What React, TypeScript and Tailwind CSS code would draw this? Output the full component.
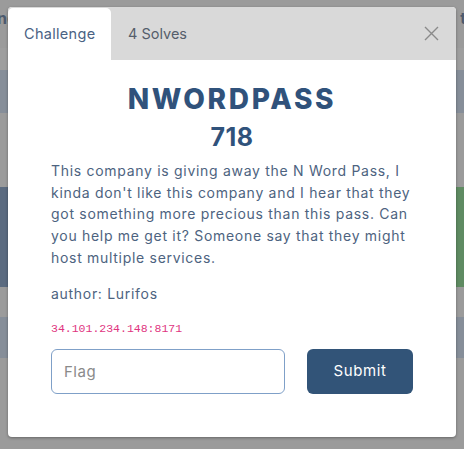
import React from "react";

export default function App() {
  const font = { fontFamily: "Inter, 'Noto Sans', sans-serif" };
  return (
    <div className="relative w-[464px] h-[449px] overflow-hidden bg-[#9b9b9b]" style={font}>
      {/* background page (dimmed) */}
      <div className="flex flex-col">
        <div className="h-[48px] flex justify-between items-start pt-[6px] text-[16px] font-bold text-[#4c5a6e]">
          <span className="-ml-[3px]">ng</span>
          <span className="-mr-[2px]">t</span>
        </div>
        <div className="h-[22px] bg-[#9e9e9e]" />
        <div className="h-[43px] bg-[#868e99]" />
        <div className="h-[74px]" />
        <div className="h-[100px] flex">
          <div className="flex-1 bg-[#5b6b80]" />
          <div className="flex-1 bg-[#5f8b62]" />
        </div>
        <div className="h-[30px]" />
        <div className="h-[41px] bg-[#868e99]" />
      </div>

      {/* modal */}
      <div className="absolute left-[8px] top-[7px] w-[448px] h-[430px] bg-white rounded-[4px] shadow-[0_1px_3px_rgba(0,0,0,0.35)] overflow-hidden flex flex-col">
        <div className="h-[53px] bg-[#d9d9d9] flex items-end relative">
          <div className="h-[52px] w-[103px] bg-white rounded-t-[5px] flex items-center pl-[16px] text-[14.5px] tracking-[0.3px] text-[#4a6283]">
            Challenge
          </div>
          <div className="h-[52px] flex items-center pl-[17px] text-[14.5px] text-[#555e6b]">
            4 Solves
          </div>
          <svg className="absolute right-[17px] top-[19px]" width="15" height="15" viewBox="0 0 15 15">
            <path d="M1 1 L14 14 M14 1 L1 14" stroke="#8a8a8a" strokeWidth="1.4" fill="none" />
          </svg>
        </div>
        <div className="px-[43px] flex flex-col">
          <h1 className="mt-[22px] text-center text-[28px] leading-[34px] font-extrabold tracking-[2.7px] text-[#30527b]">
            NWORDPASS
          </h1>
          <div className="mt-[6px] text-center text-[25px] leading-[30px] font-bold tracking-[0.5px] text-[#30527b]">718</div>
          <p className="mt-[8px] text-[14px] leading-[21.7px] tracking-[0.7px] text-[#4d6380] whitespace-nowrap">
            This company is giving away the N Word Pass, I<br />
            kinda don't like this company and I hear that they<br />
            got something more precious than this pass. Can<br />
            you help me get it? Someone say that they might<br />
            host multiple services.
          </p>
          <p className="mt-[14px] text-[14px] leading-[22px] tracking-[0.7px] text-[#4d6380]">author: Lurifos</p>
          <div className="mt-[16px] text-[11.5px] leading-[16px] text-[#e0357f]" style={{ fontFamily: "'Liberation Mono', monospace" }}>
            34.101.234.148:8171
          </div>
          <div className="mt-[12px] flex items-center gap-[22px]">
            <input
              placeholder="Flag"
              className="w-[234px] h-[45px] rounded-[6px] border border-[#7fa0c8] px-[12px] text-[15px] tracking-[0.5px] text-[#333] placeholder:text-[#8a8a8a] outline-none"
            />
            <button className="w-[106px] h-[45px] rounded-[6px] bg-[#325478] text-white text-[15px] font-normal tracking-[0.6px]">
              Submit
            </button>
          </div>
        </div>
      </div>
    </div>
  );
}
